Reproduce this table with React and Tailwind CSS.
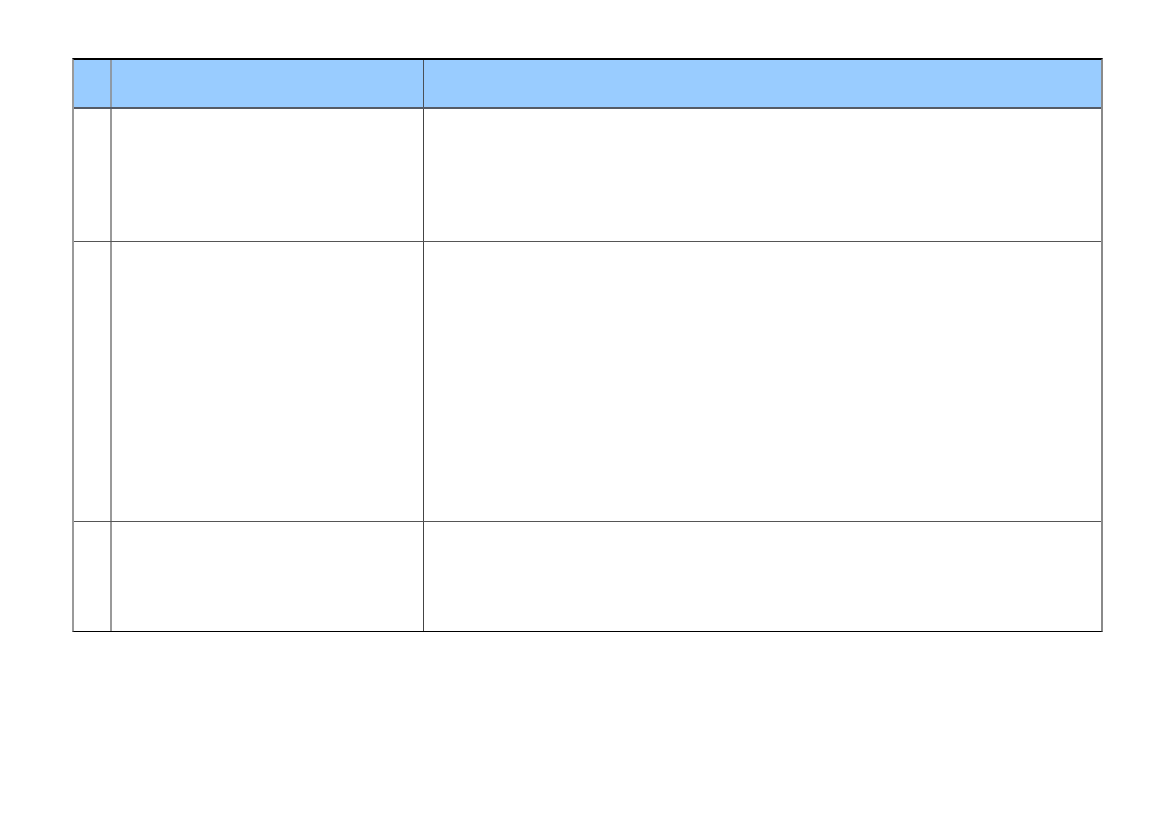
export default function App() {
  const rows = [
    { h: "h-[133px]" },
    { h: "h-[280px]" },
    { h: "h-[109px]" },
  ];
  return (
    <div className="w-[1169px] h-[827px] bg-white pt-[58px] pl-[72px]" style={{ fontFamily: '"Liberation Sans", Arial, sans-serif' }}>
      <div className="w-[1031px] border-t-2 border-t-black border-b border-b-black border-l-2 border-l-[#9a9a9a] border-r-2 border-r-[#8a8a8a] flex flex-col">
        <div className="flex h-[49px] bg-[#99ccff] border-b-2 border-b-[#555b66]">
          <div className="w-[38px] border-r-2 border-r-[#8f9aa6]"></div>
          <div className="w-[312px] border-r border-r-[#4a5058]"></div>
          <div className="flex-1"></div>
        </div>
        {rows.map((r, i) => (
          <div key={i} className={`flex ${r.h} ${i < rows.length - 1 ? "border-b border-b-[#555555]" : ""}`}>
            <div className="w-[38px] border-r-2 border-r-[#9a9a9a]"></div>
            <div className="w-[312px] border-r border-r-[#444444]"></div>
            <div className="flex-1"></div>
          </div>
        ))}
      </div>
    </div>
  );
}
